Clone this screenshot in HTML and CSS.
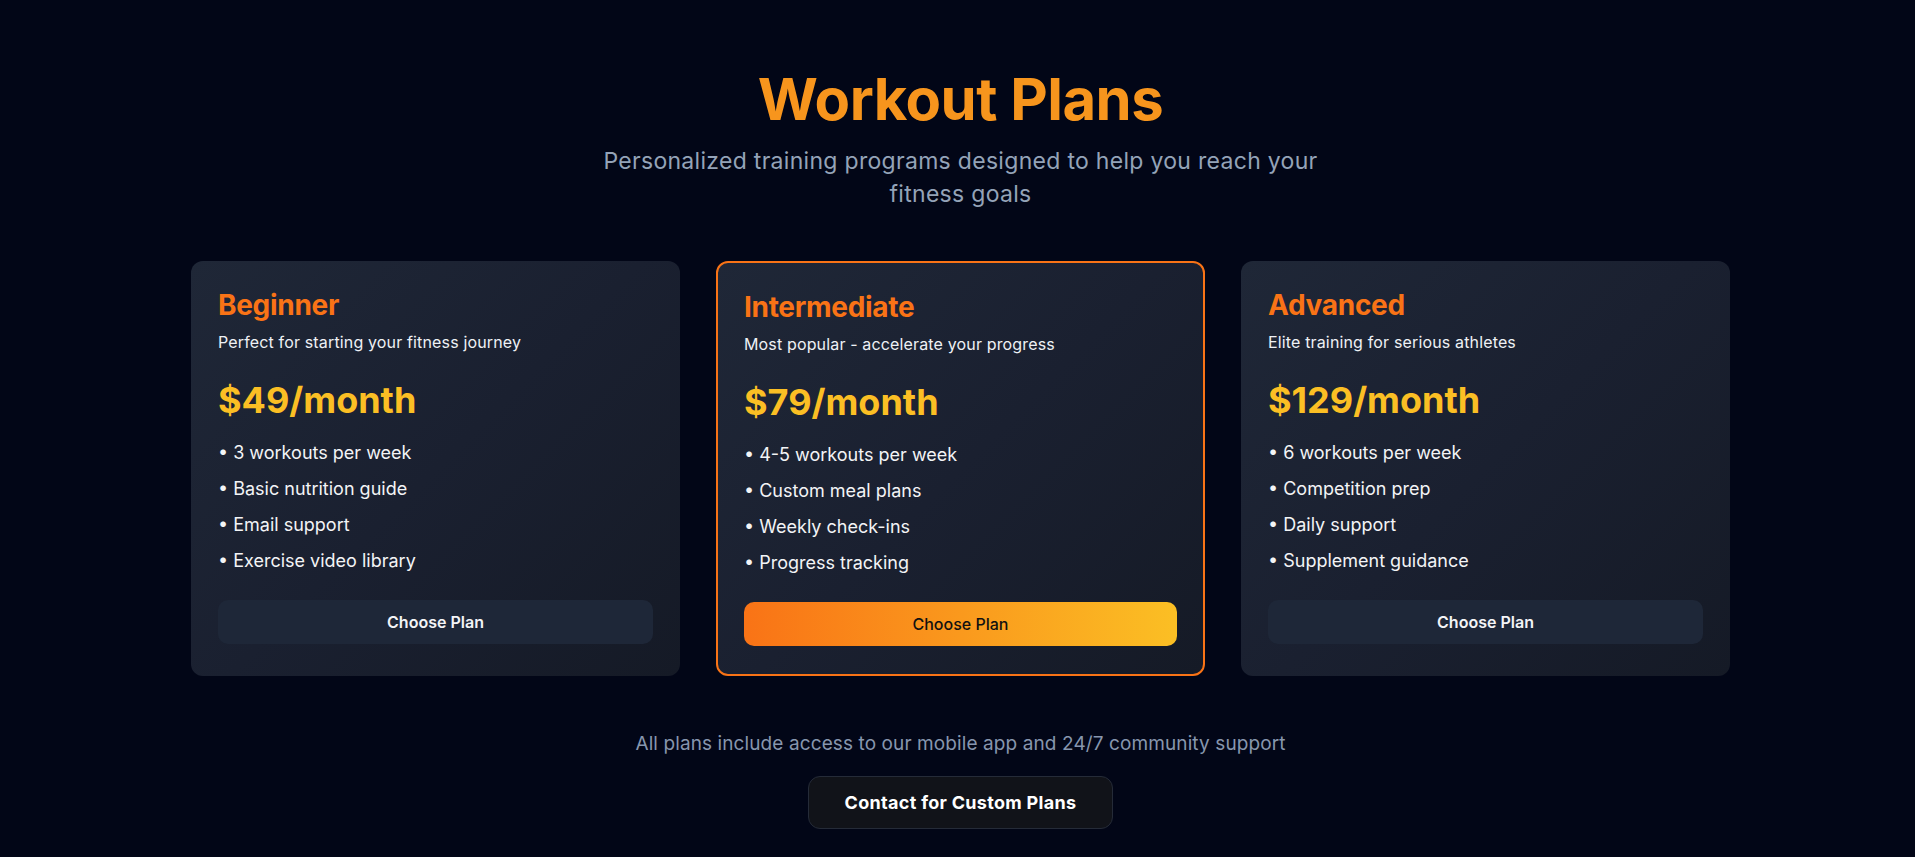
FILE: index.html
```html
<!DOCTYPE html>
<html lang="en">
<head>
<meta charset="utf-8">
<title>Workout Plans</title>
<link rel="stylesheet" href="styles.css">
</head>
<body>
<main class="page">
  <header class="hero">
    <h1 class="hero-title">Workout Plans</h1>
    <p class="hero-sub">Personalized training programs designed to help you reach your fitness goals</p>
  </header>

  <section class="plans">
    <article class="plan">
      <h3 class="plan-name">Beginner</h3>
      <p class="plan-desc">Perfect for starting your fitness journey</p>
      <p class="plan-price">$49/month</p>
      <ul class="plan-features">
        <li>• 3 workouts per week</li>
        <li>• Basic nutrition guide</li>
        <li>• Email support</li>
        <li>• Exercise video library</li>
      </ul>
      <button class="plan-btn">Choose Plan</button>
    </article>

    <article class="plan plan-featured">
      <h3 class="plan-name">Intermediate</h3>
      <p class="plan-desc">Most popular - accelerate your progress</p>
      <p class="plan-price">$79/month</p>
      <ul class="plan-features">
        <li>• 4-5 workouts per week</li>
        <li>• Custom meal plans</li>
        <li>• Weekly check-ins</li>
        <li>• Progress tracking</li>
      </ul>
      <button class="plan-btn plan-btn-featured">Choose Plan</button>
    </article>

    <article class="plan">
      <h3 class="plan-name">Advanced</h3>
      <p class="plan-desc">Elite training for serious athletes</p>
      <p class="plan-price">$129/month</p>
      <ul class="plan-features">
        <li>• 6 workouts per week</li>
        <li>• Competition prep</li>
        <li>• Daily support</li>
        <li>• Supplement guidance</li>
      </ul>
      <button class="plan-btn">Choose Plan</button>
    </article>
  </section>

  <footer class="note">
    <p class="note-text">All plans include access to our mobile app and 24/7 community support</p>
    <button class="contact-btn">Contact for Custom Plans</button>
  </footer>
</main>
</body>
</html>
```

FILE: styles.css
```css
* { box-sizing: border-box; }

html, body {
  margin: 0;
  padding: 0;
  background: #020617;
}

body {
  font-family: "Inter", "Noto Sans", sans-serif;
  color: #f3f4f6;
}

.page {
  padding: 63px 0 0 6px;
  display: flex;
  flex-direction: column;
  align-items: center;
}

.hero {
  display: flex;
  flex-direction: column;
  align-items: center;
  text-align: center;
}

.hero-title {
  margin: 0;
  font-size: 58px;
  line-height: 72px;
  font-weight: 700;
  color: #f7951d;
  letter-spacing: -0.5px;
}

.hero-sub {
  margin: 10px 0 0;
  max-width: 760px;
  font-size: 23px;
  line-height: 33px;
  font-weight: 400;
  letter-spacing: 0.3px;
  color: #94a3b8;
}

.plans {
  margin-top: 50px;
  width: 1539px;
  display: grid;
  grid-template-columns: repeat(3, 1fr);
  gap: 36px;
}

.plan {
  display: flex;
  flex-direction: column;
  padding: 26px 27px 30px;
  border-radius: 12px;
  background: linear-gradient(135deg, #1f2737 0%, #1a2030 50%, #151a26 100%);
}

.plan-featured {
  border: 2px solid #f97316;
  padding: 26px 26px 28px;
}

.plan-name {
  margin: 0;
  font-size: 28px;
  line-height: 36px;
  font-weight: 700;
  color: #f97316;
  letter-spacing: -0.3px;
}

.plan-desc {
  margin: 8px 0 0;
  font-size: 16px;
  line-height: 22px;
  letter-spacing: 0.15px;
  color: #eef1f5;
}

.plan-price {
  margin: 25px 0 0;
  font-size: 36px;
  line-height: 44px;
  font-weight: 700;
  color: #fbbf24;
}

.plan-features {
  list-style: none;
  margin: 17px 0 0;
  padding: 0;
  display: flex;
  flex-direction: column;
  gap: 8px;
}

.plan-features li {
  font-size: 18px;
  line-height: 28px;
  color: #f3f4f6;
}

.plan-btn {
  margin-top: auto;
  height: 44px;
  width: 100%;
  border: none;
  border-radius: 10px;
  background: #1e2738;
  color: #f3f4f6;
  font-family: inherit;
  font-size: 16px;
  font-weight: 600;
}

.plan-btn-featured {
  background: linear-gradient(90deg, #f97316 0%, #fbbf24 100%);
  color: #111111;
  font-weight: 500;
}

.plan-features + .plan-btn {
  margin-top: 25px;
}

.note {
  margin-top: 54px;
  display: flex;
  flex-direction: column;
  align-items: center;
}

.note-text {
  margin: 0;
  font-size: 19px;
  line-height: 28px;
  letter-spacing: 0.1px;
  color: #8796ae;
}

.contact-btn {
  margin-top: 18px;
  height: 53px;
  padding: 0 36px;
  border: 1px solid #252b38;
  border-radius: 12px;
  background: #111319;
  color: #ffffff;
  font-family: inherit;
  font-size: 18px;
  font-weight: 700;
  letter-spacing: 0.3px;
}
```
